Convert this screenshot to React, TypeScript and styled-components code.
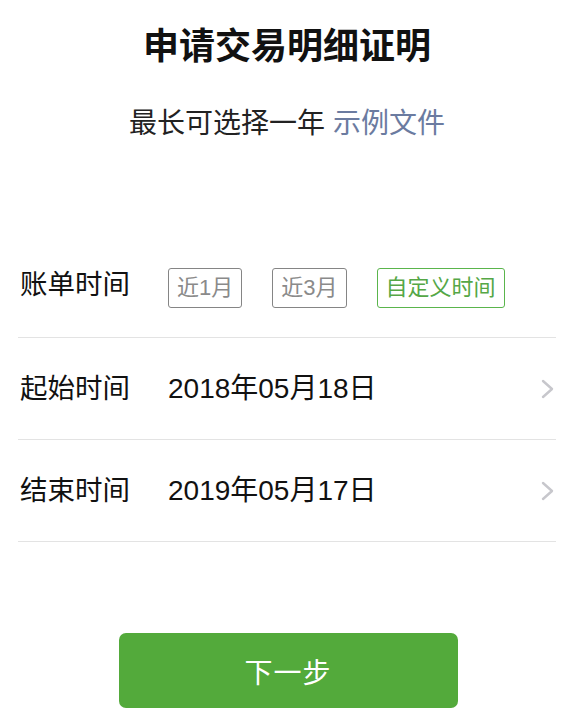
import React from 'react';
import styled, { createGlobalStyle } from 'styled-components';

const GlobalStyle = createGlobalStyle`
  html, body {
    margin: 0;
    padding: 0;
    background: #fff;
  }
  body {
    font-family: "Liberation Sans", "Noto Sans CJK SC", sans-serif;
    color: #111;
  }
`;

const Page = styled.div`
  width: 577px;
  min-height: 726px;
  box-sizing: border-box;
  padding: 26px 21px 0 18px;
  display: flex;
  flex-direction: column;
`;

const Header = styled.header`
  display: flex;
  flex-direction: column;
  align-items: center;
  gap: 40px;
`;

const Title = styled.h1`
  margin: 0;
  font-size: 36px;
  line-height: 42px;
  font-weight: 700;
  color: #111;
`;

const Subtitle = styled.p`
  margin: 0;
  font-size: 28px;
  line-height: 32px;
  color: #222;
`;

const Link = styled.a`
  color: #6b7ba0;
  text-decoration: none;
  margin-left: 8px;
`;

const List = styled.div`
  margin-top: 96px;
  display: flex;
  flex-direction: column;
`;

const Row = styled.div`
  height: 101px;
  border-bottom: 1px solid #e3e3e3;
  display: flex;
  align-items: center;
`;

const Label = styled.div<{ $offset?: number }>`
  width: 148px;
  flex-shrink: 0;
  padding-left: 2px;
  font-size: 27.5px;
  line-height: 32px;
  color: #111;
  margin-top: ${p => p.$offset ?? 0}px;
`;

const Chips = styled.div`
  display: flex;
  gap: 30px;
  margin-top: 2px;
`;

const Chip = styled.button<{ $active?: boolean }>`
  height: 40px;
  padding: 0 8px;
  background: #fff;
  border: 1.5px solid ${p => (p.$active ? '#5ab54c' : '#858585')};
  border-radius: 3px;
  color: ${p => (p.$active ? '#55a746' : '#8a8a8a')};
  font-family: "Liberation Sans", "Noto Sans CJK SC", sans-serif;
  font-size: 22px;
  line-height: 37px;
  cursor: pointer;
`;

const Value = styled.div`
  flex: 1;
  font-size: 28px;
  line-height: 32px;
  color: #111;
`;

const Chevron = styled.svg`
  width: 14px;
  height: 20px;
  margin-right: 1px;
  flex-shrink: 0;
`;

const Footer = styled.div`
  margin-top: 91px;
  display: flex;
  justify-content: center;
  padding-left: 2px;
`;

const NextButton = styled.button`
  width: 339px;
  height: 75px;
  border: none;
  border-radius: 7px;
  background: #53aa3b;
  color: #fff;
  font-family: "Liberation Sans", "Noto Sans CJK SC", sans-serif;
  font-size: 28px;
  letter-spacing: 1px;
  cursor: pointer;
`;

const ranges = [
  { label: '近1月', active: false },
  { label: '近3月', active: false },
  { label: '自定义时间', active: true },
];

const dates = [
  { label: '起始时间', value: '2018年05月18日' },
  { label: '结束时间', value: '2019年05月17日' },
];

const Arrow = () => (
  <Chevron viewBox="0 0 14 20">
    <polyline points="2,2 11,10 2,18" fill="none" stroke="#c7c7cc" strokeWidth="2.4" strokeLinecap="round" strokeLinejoin="round" />
  </Chevron>
);

export default function App() {
  return (
    <>
      <GlobalStyle />
      <Page>
        <Header>
          <Title>申请交易明细证明</Title>
          <Subtitle>
            最长可选择一年<Link href="#">示例文件</Link>
          </Subtitle>
        </Header>

        <List>
          <Row>
            <Label $offset={-4}>账单时间</Label>
            <Chips>
              {ranges.map(r => (
                <Chip key={r.label} $active={r.active}>{r.label}</Chip>
              ))}
            </Chips>
          </Row>
          {dates.map(d => (
            <Row key={d.label}>
              <Label>{d.label}</Label>
              <Value>{d.value}</Value>
              <Arrow />
            </Row>
          ))}
        </List>

        <Footer>
          <NextButton>下一步</NextButton>
        </Footer>
      </Page>
    </>
  );
}
